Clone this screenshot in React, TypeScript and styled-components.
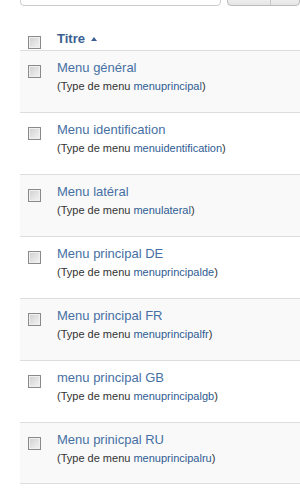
import React from 'react';
import styled, { createGlobalStyle } from 'styled-components';

const GlobalStyle = createGlobalStyle`
  html, body { margin: 0; padding: 0; background: #fff; }
  body { font-family: "Liberation Sans", Arial, sans-serif; color: #333; overflow: hidden; }
`;

const Page = styled.div`
  width: 300px;
  height: 500px;
  overflow: hidden;
  padding-left: 20px;
  box-sizing: border-box;
`;

const SearchBar = styled.div`
  display: flex;
  gap: 6px;
  height: 7px;
`;

const SearchInput = styled.div`
  width: 220px;
  height: 20px;
  margin-top: -14px;
  border: 1px solid #ccc;
  border-radius: 4px;
  box-sizing: border-box;
  background: #fff;
`;

const ButtonGroup = styled.div`
  display: flex;
  margin-top: -14px;
  height: 20px;
  border: 1px solid #bbb;
  border-radius: 4px;
  box-sizing: border-box;
  background: linear-gradient(#fff, #e6e6e6);
  width: 80px;
`;

const ButtonPart = styled.div<{ $w: number }>`
  width: ${p => p.$w}px;
  border-right: 1px solid #c8c8c8;
`;

const Table = styled.div`
  width: 300px;
`;

const HeaderRow = styled.div`
  display: flex;
  align-items: flex-start;
  height: 43px;
  padding-top: 24px;
  box-sizing: border-box;
`;

const CheckCell = styled.div<{ $top: number }>`
  width: 37px;
  padding-left: 8px;
  padding-top: ${p => p.$top}px;
  box-sizing: border-box;
  flex-shrink: 0;
`;

const Checkbox = styled.span`
  display: block;
  width: 13px;
  height: 13px;
  box-sizing: border-box;
  border: 1px solid #8a8a8a;
  background: linear-gradient(135deg, #cfcfcf 0%, #e4e4e4 55%, #f3f3f3 100%);
  box-shadow: inset 0 0 0 1px #f0f0f0;
`;

const SortLink = styled.a`
  display: flex;
  align-items: center;
  gap: 6px;
  font-size: 13px;
  font-weight: bold;
  line-height: 16px;
  color: #3a5f92;
  text-decoration: none;
`;

const Caret = styled.span`
  width: 0;
  height: 0;
  border-left: 3.5px solid transparent;
  border-right: 3.5px solid transparent;
  border-bottom: 4px solid #3a5f92;
  margin-top: -1px;
`;

const Row = styled.div<{ $striped: boolean }>`
  display: flex;
  align-items: flex-start;
  height: 62px;
  box-sizing: border-box;
  border-top: 1px solid #ddd;
  background: ${p => (p.$striped ? '#f9f9f9' : '#fff')};
  padding-top: 9px;

  &:last-child {
    border-bottom: 1px solid #ddd;
  }
`;

const TitleCell = styled.div`
  display: flex;
  flex-direction: column;
`;

const MenuTitle = styled.a`
  font-size: 13px;
  line-height: 16px;
  color: #4670a4;
  text-decoration: none;
`;

const MenuType = styled.div`
  font-size: 11px;
  line-height: 14px;
  margin-top: 3px;
  color: #333;
  white-space: nowrap;
`;

const TypeName = styled.span`
  color: #2f5c93;
`;

const menus = [
  { title: 'Menu général', type: 'menuprincipal' },
  { title: 'Menu identification', type: 'menuidentification' },
  { title: 'Menu latéral', type: 'menulateral' },
  { title: 'Menu principal DE', type: 'menuprincipalde' },
  { title: 'Menu principal FR', type: 'menuprincipalfr' },
  { title: 'menu principal GB', type: 'menuprincipalgb' },
  { title: 'Menu prinicpal RU', type: 'menuprincipalru' },
];

export default function App() {
  return (
    <>
      <GlobalStyle />
      <Page>
        <SearchBar>
          <SearchInput />
          <ButtonGroup>
            <ButtonPart $w={42} />
          </ButtonGroup>
        </SearchBar>
        <Table>
          <HeaderRow>
            <CheckCell $top={5}>
              <Checkbox />
            </CheckCell>
            <SortLink href="#">
              Titre <Caret />
            </SortLink>
          </HeaderRow>
          {menus.map((m, i) => (
            <Row key={m.type} $striped={i % 2 === 0}>
              <CheckCell $top={5}>
                <Checkbox />
              </CheckCell>
              <TitleCell>
                <MenuTitle href="#">{m.title}</MenuTitle>
                <MenuType>
                  (Type de menu <TypeName>{m.type}</TypeName>)
                </MenuType>
              </TitleCell>
            </Row>
          ))}
        </Table>
      </Page>
    </>
  );
}
